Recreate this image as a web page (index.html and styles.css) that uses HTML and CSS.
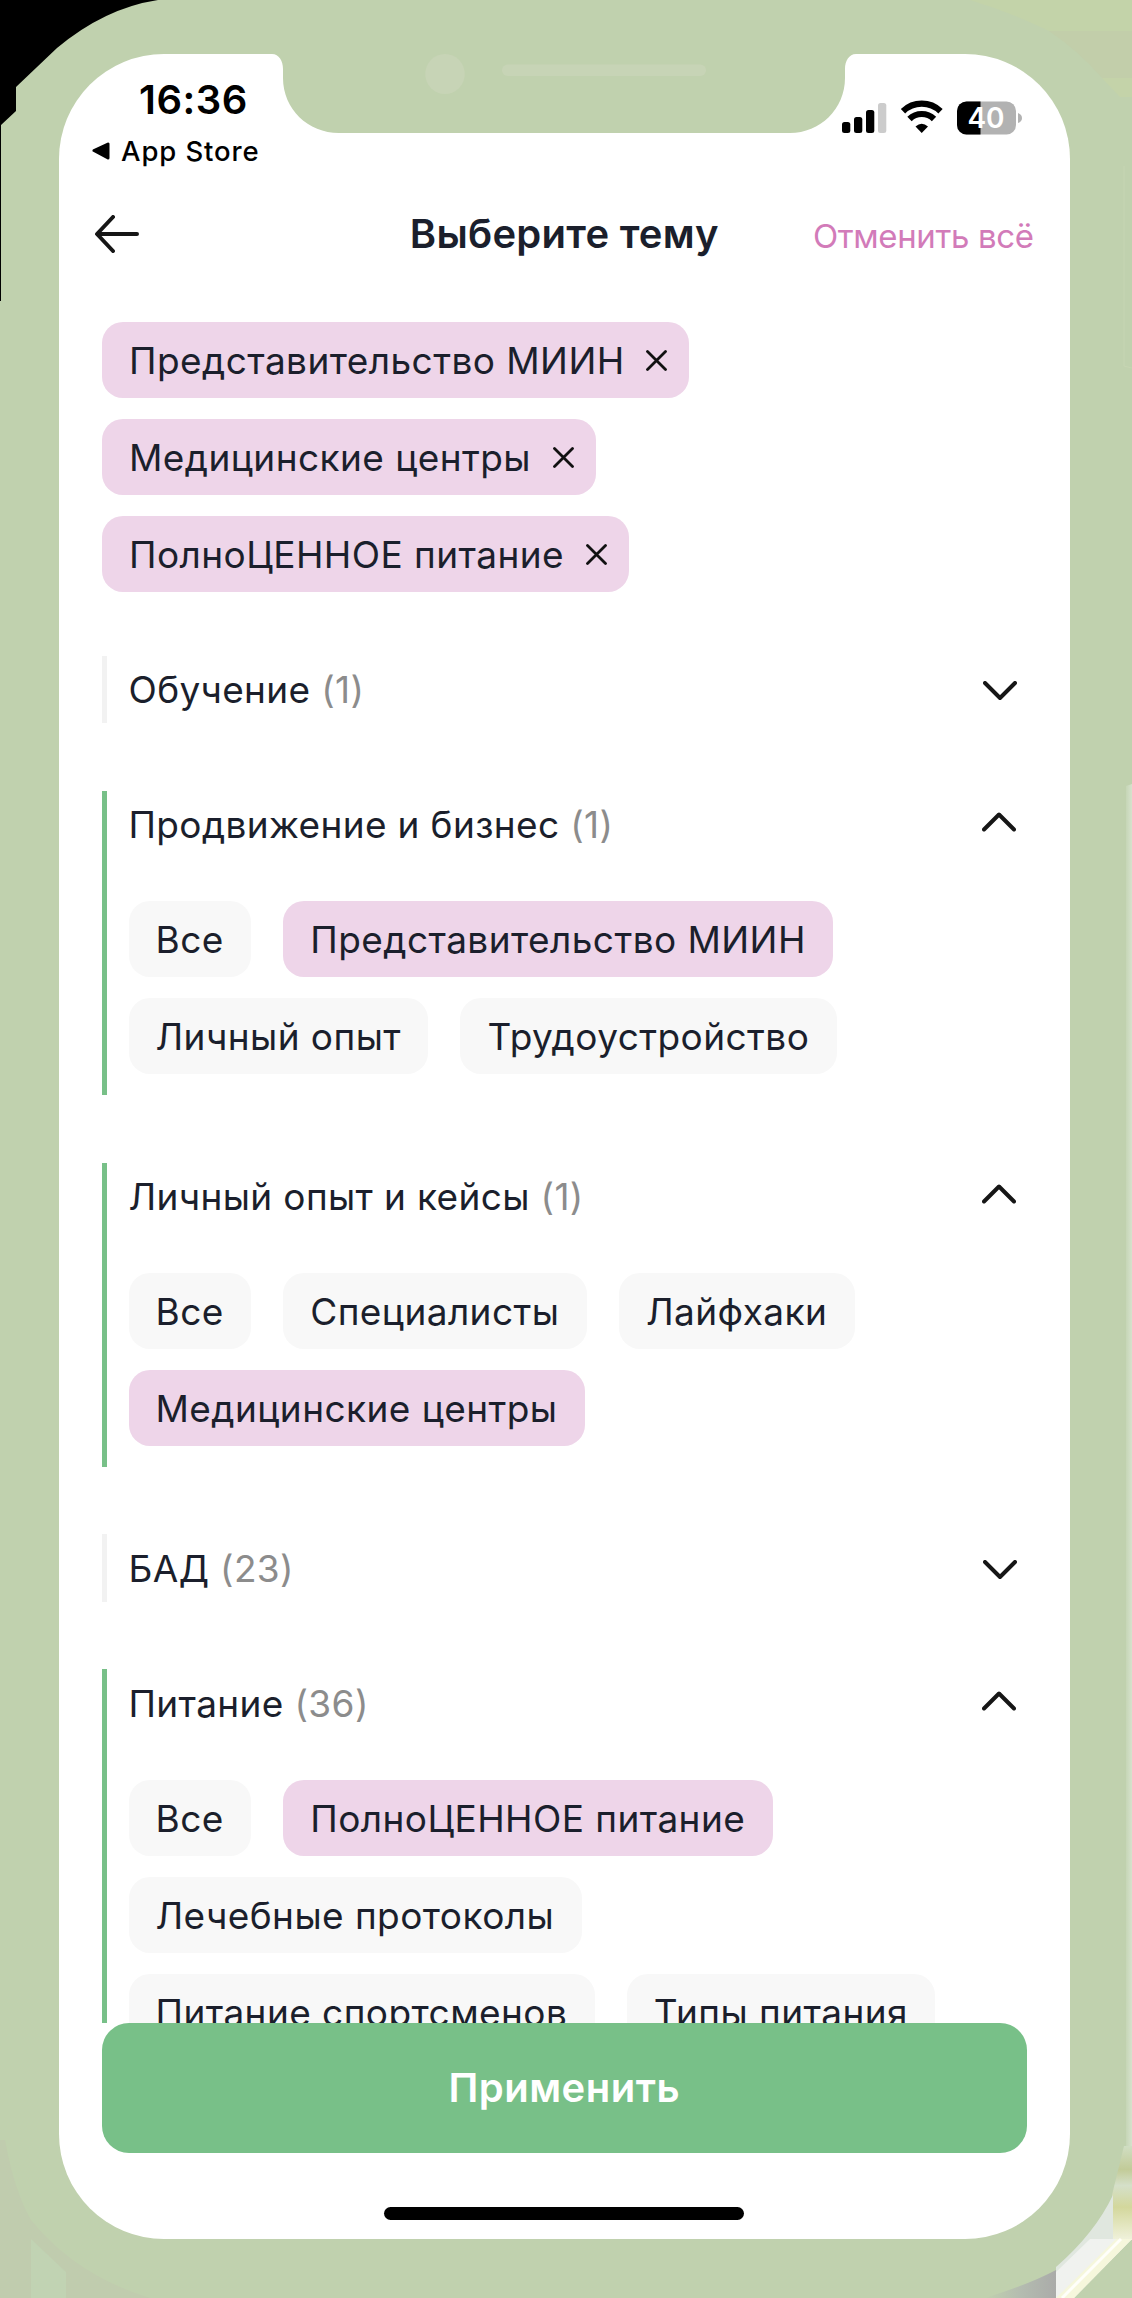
FILE: index.html
```html
<!DOCTYPE html>
<html lang="ru">
<head>
<meta charset="utf-8">
<title>Выберите тему</title>
<link rel="stylesheet" href="styles.css">
</head>
<body>
<svg class="backdrop" viewBox="0 0 1132 2298" aria-hidden="true">
  <defs>
    <linearGradient id="edge" x1="0" x2="1" y1="0" y2="0">
      <stop offset="0" stop-color="#c6d6b6"/><stop offset="1" stop-color="#d6e2cd"/>
    </linearGradient>
    <linearGradient id="glow" x1="0" x2="0" y1="0" y2="1">
      <stop offset="0" stop-color="#d0dec3"/><stop offset=".25" stop-color="#c2cb98"/><stop offset=".42" stop-color="#d5e0c9"/><stop offset=".65" stop-color="#d3d79c"/><stop offset="1" stop-color="#f0f2dc"/>
    </linearGradient>
    <linearGradient id="shade" x1="0" x2="1" y1="0" y2="0">
      <stop offset="0" stop-color="#c0d1ae"/><stop offset=".5" stop-color="#b4bcb0"/><stop offset="1" stop-color="#aaaba9"/>
    </linearGradient>
  </defs>
  <path d="M0 0H158Q105 8 57 48L16 87V111L1 125V301H0Z" fill="#000"/>
  <path d="M970 0H1132V31H1049Q1010 12 970 0Z" fill="#c3d3a9"/>
  <path d="M1049 31H1132V78H1102Q1080 52 1049 31Z" fill="#c2ceaa"/>
  <path d="M1102 78H1132V97H1120Z" fill="#c4d3a9"/>
  <path d="M1124 166V366L1132 368" fill="none" stroke="#c6d5b3"/>
  <path d="M1126 786L1132 784V2146H1126Z" fill="url(#edge)"/>
  <path d="M0 2140H5Q14 2190 31 2220Q75 2275 150 2298H0Z" fill="#c0ccae"/>
  <path d="M31 2239L66 2272V2298H31Z" fill="#c1d3b3"/>
  <path d="M1124 2146H1132V2240H1112V2195Z" fill="url(#glow)"/>
  <path d="M985 2298Q1030 2284 1056 2270V2298Z" fill="url(#shade)"/>
  <path d="M1113 2195V2239L1056 2296V2267Q1095 2233 1113 2195Z" fill="#e0e7df"/>
  <path d="M1056 2272L1090 2239H1132L1074 2298H1056Z" fill="#f0f2ef"/>
  <path d="M1056 2298L1116 2239H1132L1074 2298Z" fill="#f6f7dc"/>
  <path d="M1062 2298L1121 2239" stroke="#fffffa" stroke-width="3"/>
</svg>
<main class="screen">
  <svg class="notch" viewBox="0 0 584 80" aria-hidden="true">
    <path d="M0 0C7 0 11 7 11 15V24C11 55 36 79 67 79H518C548 79 573 55 573 24V15C573 7 577 0 584 0Z" fill="#c0d1ae"/>
    <ellipse cx="173" cy="20" rx="19.7" ry="20" fill="#c7d4b6"/>
    <rect x="230" y="10.5" width="204" height="11.5" rx="5.7" fill="#c7d4b6"/>
  </svg>
  <header class="status">
    <div class="status-left">
      <div class="clock">16:36</div>
      <div class="back-app">
        <svg width="19" height="19" viewBox="0 0 19 19"><path d="M2 8.5L16 2V16Z" stroke="#000" stroke-width="3" stroke-linejoin="round"/></svg>
        <span>App Store</span>
      </div>
    </div>
    <svg class="indicators" width="182" height="36" viewBox="0 0 182 36">
      <rect x="0" y="22" width="8.3" height="11" rx="2.5"/>
      <rect x="12" y="17" width="8.3" height="16" rx="2.5"/>
      <rect x="24" y="10" width="8.3" height="23" rx="2.5"/>
      <rect x="36" y="3" width="8.3" height="30" rx="2.5" fill="#ccc"/>
      <g fill="none" stroke="#000" stroke-width="6.2"><path d="M61 11.2a27 27 0 0 1 37.500 0"/><path d="M67.500 19a17.500 17.500 0 0 1 24.500 0"/></g>
      <path d="M79.700 33L73.500 26.500Q79.700 21 86 26.500Z"/>
      <rect x="115" y="1.500" width="59" height="33" rx="9.500" fill="#b2b2b2"/>
      <path d="M138.500 1.500V34.500H124.500a9.500 9.500 0 0 1-9.500-9.500V11a9.500 9.500 0 0 1 9.500-9.500Z"/>
      <path d="M176 13q4 1.500 4 5t-4 5Z" fill="#b2b2b2"/>
      <text class="charge" x="144" y="28" text-anchor="middle">40</text>
    </svg>
  </header>
  <nav class="topbar">
    <svg class="arrow" width="46" height="38" viewBox="0 0 46 38"><path d="M20 2L4 19L20 36M5 19H44" fill="none" stroke="#161616" stroke-width="4" stroke-linecap="round" stroke-linejoin="round"/></svg>
    <h1>Выберите тему</h1>
    <a class="reset">Отменить всё</a>
  </nav>
  <section class="picked">
    <div class="chip on"><span>Представительство МИИН</span><svg class="x" viewBox="0 0 21 21"><path d="M1.500 1.500L19.500 19.500M19.500 1.500L1.500 19.500"/></svg></div>
    <div class="chip on"><span>Медицинские центры</span><svg class="x" viewBox="0 0 21 21"><path d="M1.500 1.500L19.500 19.500M19.500 1.500L1.500 19.500"/></svg></div>
    <div class="chip on"><span>ПолноЦЕННОЕ питание</span><svg class="x" viewBox="0 0 21 21"><path d="M1.500 1.500L19.500 19.500M19.500 1.500L1.500 19.500"/></svg></div>
  </section>
  <div class="groups">
    <section class="group">
      <h2>Обучение <small>(1)</small><svg class="chev" viewBox="0 0 34 20"><path d="M2 2L17 17L32 2"/></svg></h2>
    </section>
    <section class="group open">
      <h2>Продвижение и бизнес <small>(1)</small><svg class="chev" viewBox="0 0 34 20"><path d="M2 17.500L17 2.500L32 17.500"/></svg></h2>
      <div class="chips">
        <div class="chip">Все</div><div class="chip on">Представительство МИИН</div>
        <div class="chip">Личный опыт</div><div class="chip">Трудоустройство</div>
      </div>
    </section>
    <section class="group open">
      <h2>Личный опыт и кейсы <small>(1)</small><svg class="chev" viewBox="0 0 34 20"><path d="M2 17.500L17 2.500L32 17.500"/></svg></h2>
      <div class="chips">
        <div class="chip">Все</div><div class="chip">Специалисты</div><div class="chip">Лайфхаки</div>
        <div class="chip on">Медицинские центры</div>
      </div>
    </section>
    <section class="group">
      <h2>БАД <small>(23)</small><svg class="chev" viewBox="0 0 34 20"><path d="M2 2L17 17L32 2"/></svg></h2>
    </section>
    <section class="group open">
      <h2>Питание <small>(36)</small><svg class="chev" viewBox="0 0 34 20"><path d="M2 17.500L17 2.500L32 17.500"/></svg></h2>
      <div class="chips">
        <div class="chip">Все</div><div class="chip on">ПолноЦЕННОЕ питание</div>
        <div class="chip">Лечебные протоколы</div>
        <div class="chip">Питание спортсменов</div><div class="chip">Типы питания</div>
      </div>
    </section>
  </div>
  <button class="apply">Применить</button>
  <div class="home"></div>
</main>
</body>
</html>
```
FILE: styles.css
```css
* { box-sizing: border-box; }
body {
  margin: 0;
  height: 2298px;
  padding: 54px 0 0 59px;
  overflow: hidden;
  position: relative;
  background: #c0d1ae;
  color: #1b1f2c;
  font-family: Inter, "Liberation Sans", sans-serif;
}
.backdrop { position: absolute; left: 0; top: 0; width: 1132px; height: 2298px; }
.screen {
  position: relative;
  width: 1010.500px;
  height: 2184.500px;
  background: #fff;
  border-radius: 105px;
  display: flex;
  flex-direction: column;
}
.notch { position: absolute; left: 213px; top: 0; width: 584px; height: 80px; }
.status {
  height: 122px;
  display: flex;
  justify-content: space-between;
  color: #000;
  padding: 0 46px 0 33px;
}
.status-left { padding-top: 22px; }
.clock { font-size: 40px; line-height: 48px; font-weight: 600; padding-left: 47px; letter-spacing: .5px; }
.back-app { display: flex; align-items: center; gap: 10px; font-size: 27.500px; line-height: 34px; font-weight: 500; letter-spacing: .9px; margin-top: 10px; }
.indicators { margin-top: 46px; overflow: visible; }
.charge { font-size: 28px; font-weight: 600; fill: #fff; }
.topbar {
  height: 115px;
  display: grid;
  grid-template-columns: 1fr auto 1fr;
  align-items: center;
  padding: 0 36px 0 34px;
}
h1 { margin: 0; font-size: 40px; font-weight: 600; line-height: 48px; letter-spacing: .25px; padding-left: 2px; }
.reset { justify-self: end; color: #d27bb9; font-size: 33px; line-height: 40px; margin-top: 5px; letter-spacing: -.38px; }
.picked { display: flex; flex-direction: column; align-items: flex-start; gap: 21.400px; margin: 31px 0 0 43px; }
.chip {
  height: 75.600px;
  display: flex;
  align-items: center;
  padding: 1px 27.500px 0 27px;
  border-radius: 21px;
  background: #f8f8f8;
  font-size: 37px;
  letter-spacing: .43px;
  white-space: nowrap;
}
.chip.on { background: #eed5e9; }
.picked .chip { padding-right: 22px; gap: 21.500px; }
.x { width: 21px; height: 21px; fill: none; stroke: #111; stroke-width: 2.800; stroke-linecap: round; }
.groups { flex: none; margin: 0 43px; padding-top: 64px; display: flex; flex-direction: column; gap: 67.500px; height: 1431.500px; overflow: hidden; }
.group { flex: none; border-left: 5.500px solid #f2f2f2; padding-left: 21.500px; }
.group.open { border-color: #78c088; padding-bottom: 21.200px; }
h2 { margin: 0; height: 67.500px; display: flex; align-items: center; font-size: 37px; font-weight: 400; letter-spacing: .36px; white-space: pre; }
small { font-size: inherit; color: #8c8c8c; }
.chev { width: 34px; height: 20px; margin: 3px 10px 0 auto; fill: none; stroke: #161616; stroke-width: 4; stroke-linecap: round; stroke-linejoin: round; }
.open .chev { margin: 0 11px 4px auto; }
.chips { display: flex; flex-wrap: wrap; gap: 21.400px 32px; margin-top: 43.200px; }
.apply {
  flex: none;
  height: 129.500px;
  margin: 0 43px;
  border: 0;
  border-radius: 27px;
  background: #78c088;
  color: #fff;
  font: 600 40px/48px Inter, "Liberation Sans", sans-serif;
  letter-spacing: .5px;
}
.home { flex: none; width: 360px; height: 13.500px; margin: 54px auto 0; border-radius: 7px; background: #000; }
```
